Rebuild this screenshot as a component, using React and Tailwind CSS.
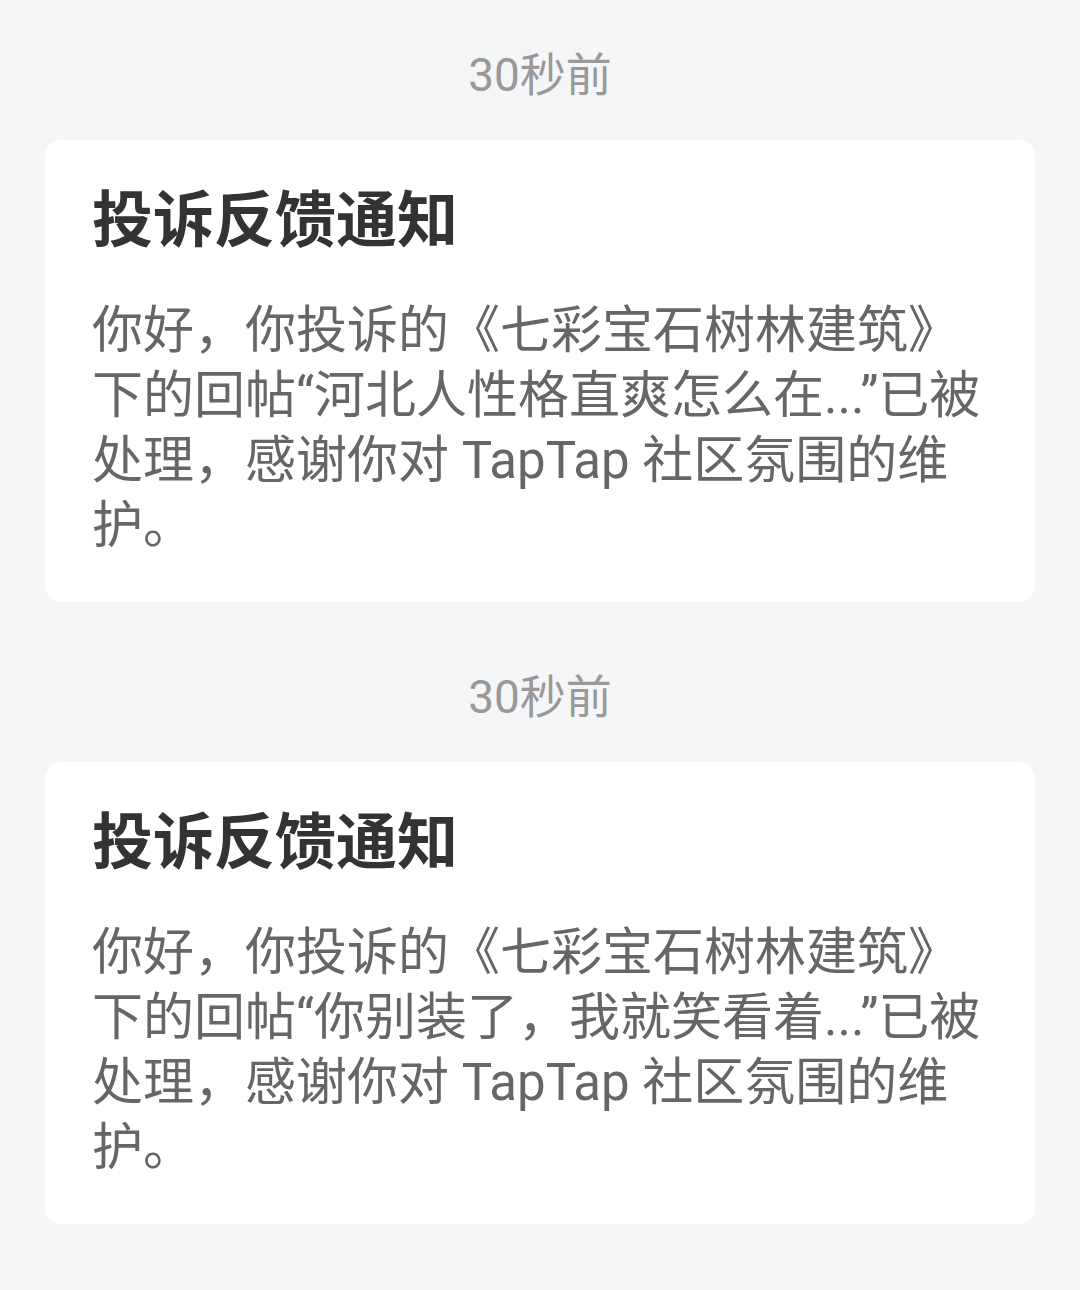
const items = [
  {
    time: "30秒前",
    title: "投诉反馈通知",
    body: "你好，你投诉的《七彩宝石树林建筑》下的回帖“河北人性格直爽怎么在...”已被处理，感谢你对 TapTap 社区氛围的维护。",
  },
  {
    time: "30秒前",
    title: "投诉反馈通知",
    body: "你好，你投诉的《七彩宝石树林建筑》下的回帖“你别装了，我就笑看着...”已被处理，感谢你对 TapTap 社区氛围的维护。",
  },
];

function Notice({ time, title, body }) {
  return (
    <div className="flex flex-col">
      <div className="text-center text-[46px] leading-[64px] text-[#999999]">{time}</div>
      <div className="mt-[33px] rounded-[16px] bg-white px-[47px] pt-[41px] pb-[44px]">
        <div className="text-[61px] leading-[80px] font-bold text-[#333333]">{title}</div>
        <p className="mt-[37px] text-[51px] leading-[65px] text-[#666666]">{body}</p>
      </div>
    </div>
  );
}

export default function App() {
  return (
    <div
      lang="zh-CN"
      className="min-h-[1290px] bg-[#f5f6f8] px-[45px] pt-[43px] pb-[60px] flex flex-col gap-[63px]"
      style={{ fontFamily: 'Roboto, "Noto Sans CJK SC", sans-serif' }}
    >
      {items.map((n, i) => (
        <Notice key={i} {...n} />
      ))}
    </div>
  );
}
